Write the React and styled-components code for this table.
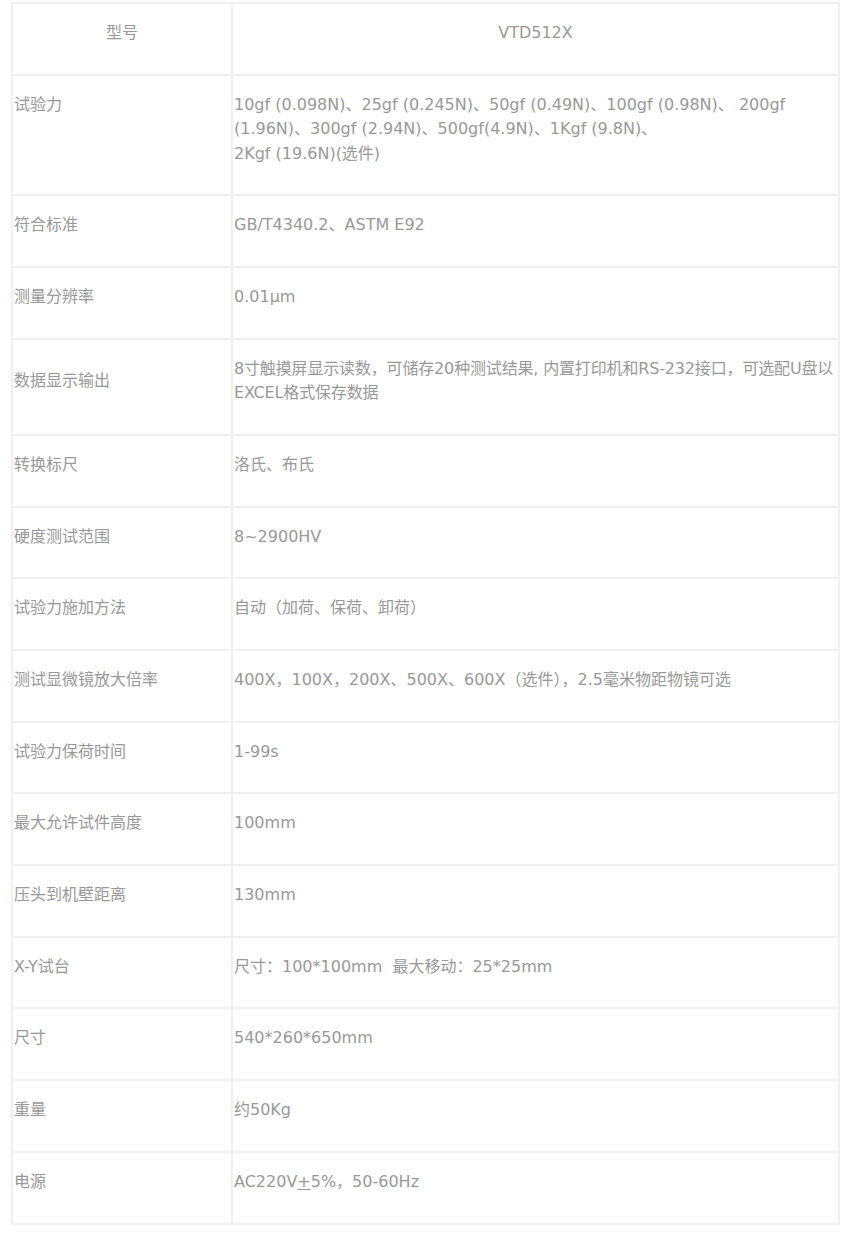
import React from "react";
import styled, { createGlobalStyle } from "styled-components";

const GlobalStyle = createGlobalStyle`
  html, body {
    margin: 0;
    padding: 0;
    background: #fff;
  }
  body {
    font-family: "DejaVu Sans", "Noto Sans CJK SC", sans-serif;
  }
`;

const specs = [
  {
    label: "试验力",
    top: true,
    lines: [
      "10gf (0.098N)、25gf (0.245N)、50gf (0.49N)、100gf (0.98N)、 200gf",
      "(1.96N)、300gf (2.94N)、500gf(4.9N)、1Kgf (9.8N)、",
      "2Kgf (19.6N)(选件)",
    ],
  },
  { label: "符合标准", lines: ["GB/T4340.2、ASTM E92"] },
  { label: "测量分辨率", lines: ["0.01μm"] },
  {
    label: "数据显示输出",
    tight: true,
    lines: [
      "8寸触摸屏显示读数，可储存20种测试结果, 内置打印机和RS-232接口，可选配U盘以",
      "EXCEL格式保存数据",
    ],
  },
  { label: "转换标尺", lines: ["洛氏、布氏"] },
  { label: "硬度测试范围", lines: ["8~2900HV"] },
  { label: "试验力施加方法", lines: ["自动（加荷、保荷、卸荷）"] },
  {
    label: "测试显微镜放大倍率",
    lines: ["400X，100X，200X、500X、600X（选件），2.5毫米物距物镜可选"],
  },
  { label: "试验力保荷时间", lines: ["1-99s"] },
  { label: "最大允许试件高度", lines: ["100mm"] },
  { label: "压头到机壁距离", lines: ["130mm"] },
  { label: "X-Y试台", lines: ["尺寸：100*100mm  最大移动：25*25mm"] },
  { label: "尺寸", lines: ["540*260*650mm"] },
  { label: "重量", lines: ["约50Kg"] },
  { label: "电源", power: true },
];

const Page = styled.div`
  padding: 2px 10px 8px 11px;
`;

const SpecTable = styled.table`
  width: 829px;
  table-layout: fixed;
  border-collapse: separate;
  border-spacing: 0;
  border: 1px solid #f0f0f0;
  color: #999;
  font-size: 16px;
  line-height: 24.5px;
`;

const Cell = styled.td`
  border: 1px solid #f0f0f0;
  padding: 17px 1px 28.2px 1px;
  vertical-align: ${(p) => (p.$top ? "top" : "middle")};
  text-align: ${(p) => (p.$center ? "center" : "left")};
`;

const Line = styled.span`
  display: block;
  white-space: pre;
  letter-spacing: ${(p) => (p.$tight ? "-0.16px" : "normal")};
`;

const PlusMinus = styled.span`
  text-decoration: underline;
  text-underline-offset: 2px;
`;

export default function App() {
  return (
    <>
      <GlobalStyle />
      <Page>
        <SpecTable>
          <colgroup>
            <col style={{ width: "220px" }} />
            <col />
          </colgroup>
          <tbody>
            <tr>
              <Cell $center>型号</Cell>
              <Cell $center>VTD512X</Cell>
            </tr>
            {specs.map((s) => (
              <tr key={s.label}>
                <Cell $top={s.top}>{s.label}</Cell>
                <Cell>
                  {s.power ? (
                    <Line>
                      AC220V<PlusMinus>+</PlusMinus>5%，50-60Hz
                    </Line>
                  ) : (
                    s.lines.map((l) => (
                      <Line key={l} $tight={s.tight}>
                        {l}
                      </Line>
                    ))
                  )}
                </Cell>
              </tr>
            ))}
          </tbody>
        </SpecTable>
      </Page>
    </>
  );
}
